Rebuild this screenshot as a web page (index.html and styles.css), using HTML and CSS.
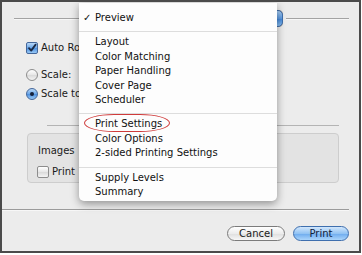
FILE: index.html
```html
<!DOCTYPE html>
<html>

<head>
    <title>Print</title>
    <link rel="stylesheet" href="styles.css">
</head>

<body>
    <div class="sheet">
        <div class="top-row">
            <div class="rule"></div>
            <div class="popup"><span class="popup-cap"></span></div>
            <div class="rule rule-short"></div>
        </div>

        <label class="option option-rotate">
            <span class="check checked">
                <svg width="10" height="10" viewBox="0 0 10 10"><path d="M2 5.2 L4.2 7.6 L8.6 1.6" fill="none" stroke="#1b2a44" stroke-width="1.8" stroke-linecap="round" stroke-linejoin="round"/></svg>
            </span>Auto Rotate
        </label>
        <label class="option option-scale"><span class="radio"></span>Scale:</label>
        <label class="option option-fit"><span class="radio selected"></span>Scale to Fit:</label>

        <div class="section-rule"></div>

        <div class="group">
            <div class="group-title">Images</div>
            <label class="option"><span class="check"></span>Print</label>
        </div>

        <div class="footer-rule"></div>
        <div class="buttons">
            <button class="button">Cancel</button>
            <button class="button button-default">Print</button>
        </div>

        <!-- popup menu, open over the dialog -->
        <div class="menu">
            <div class="menu-item"><span class="tick">&#10003;</span>Preview</div>
            <div class="menu-sep"></div>
            <div class="menu-item">Layout</div>
            <div class="menu-item">Color Matching</div>
            <div class="menu-item">Paper Handling</div>
            <div class="menu-item">Cover Page</div>
            <div class="menu-item">Scheduler</div>
            <div class="menu-sep"></div>
            <div class="menu-item"><span class="marked">Print Settings</span></div>
            <div class="menu-item">Color Options</div>
            <div class="menu-item">2-sided Printing Settings</div>
            <div class="menu-sep"></div>
            <div class="menu-item">Supply Levels</div>
            <div class="menu-item">Summary</div>
        </div>
    </div>
</body>

</html>
```

FILE: styles.css
```css
body {
    margin: 0;
    background: #ffffff;
    font-family: "DejaVu Sans", sans-serif;
    font-size: 10px;
    color: #1a1a1a;
}

.sheet {
    position: relative;
    width: 361px;
    height: 253px;
    box-sizing: border-box;
    border: 2px solid #4b4b4b;
    background: #ececec;
    padding: 8px 10px 0 12px;
    overflow: hidden;
}

.top-row {
    display: flex;
    align-items: center;
    height: 17px;
}

.rule {
    flex: 1;
    height: 1px;
    background: #a3a3a3;
    border-bottom: 1px solid #f7f7f7;
}

.rule-short {
    flex: none;
    width: 63px;
}

.popup {
    position: relative;
    width: 183px;
    height: 17px;
    margin: 0 3px;
    box-sizing: border-box;
    border: 1px solid #8c8c8c;
    border-radius: 4px;
    background: #fafafa;
}

.popup-cap {
    position: absolute;
    right: -1px;
    top: -1px;
    width: 18px;
    height: 17px;
    box-sizing: border-box;
    border: 1px solid #3f6fae;
    border-radius: 0 5px 5px 0;
    background: linear-gradient(#a9cff5, #5d9be2 50%, #3f84d8 51%, #8cc2f4);
}

.option {
    display: flex;
    align-items: center;
    gap: 3px;
    height: 14px;
    line-height: 14px;
    white-space: nowrap;
}

.option-rotate {
    margin: 14px 0 0 12px;
}

.option-scale {
    margin: 13px 0 0 12px;
}

.option-fit {
    margin: 5px 0 0 12px;
}

.check {
    display: flex;
    align-items: center;
    justify-content: center;
    width: 12px;
    height: 12px;
    box-sizing: border-box;
    border: 1px solid #8d8d8d;
    border-radius: 2px;
    background: linear-gradient(#ffffff, #e6e6e6 50%, #d9d9d9 51%, #f4f4f4);
}

.check.checked {
    border-color: #44679b;
    background: linear-gradient(#b9d8f7, #6aa6e8 50%, #4b8ede 51%, #97c8f5);
}

.radio {
    position: relative;
    width: 12px;
    height: 12px;
    box-sizing: border-box;
    border: 1px solid #8d8d8d;
    border-radius: 50%;
    background: linear-gradient(#ffffff, #e6e6e6 50%, #d9d9d9 51%, #f4f4f4);
}

.radio.selected {
    border-color: #44679b;
    background: linear-gradient(#b9d8f7, #6aa6e8 50%, #4b8ede 51%, #97c8f5);
}

.radio.selected::after {
    content: "";
    position: absolute;
    left: 3px;
    top: 3px;
    width: 4px;
    height: 4px;
    border-radius: 50%;
    background: #15213a;
}

.section-rule {
    height: 1px;
    margin: 24px 10px 0 33px;
    background: #b4b4b4;
}

.group {
    height: 50px;
    box-sizing: border-box;
    margin: 7px 10px 0 13px;
    padding: 10px 10px 0 9px;
    border: 1px solid #cdcdcd;
    border-radius: 4px;
    background: #e3e3e3;
}

.group-title {
    height: 14px;
    line-height: 14px;
    margin: 0 0 7px 1px;
}

.footer-rule {
    height: 1px;
    margin: 26px 0 0 -12px;
    background: #9b9b9b;
    border-bottom: 1px solid #f7f7f7;
}

.buttons {
    display: flex;
    justify-content: flex-end;
    gap: 8px;
    margin-top: 15px;
}

.button {
    width: 58px;
    height: 15px;
    padding: 0;
    box-sizing: border-box;
    border: 1px solid #7b7b7b;
    border-radius: 8px;
    background: linear-gradient(#ffffff, #ececec 50%, #dedede 51%, #f7f7f7);
    font-family: "DejaVu Sans", sans-serif;
    font-size: 10px;
    line-height: 13px;
    color: #1a1a1a;
}

.button-default {
    width: 56px;
    border-color: #3f6fae;
    background: linear-gradient(#d2e7fc, #92c3f3 50%, #6caaee 51%, #abd5fb);
    color: #10203a;
}

.menu {
    position: absolute;
    left: 77px;
    top: 1px;
    width: 198px;
    padding: 8px 0 2px;
    background: #fdfdfd;
    border-radius: 0 0 5px 5px;
    box-shadow: 0 3px 9px rgba(0, 0, 0, 0.38);
}

.menu-item {
    position: relative;
    height: 14.4px;
    line-height: 14.4px;
    padding-left: 16px;
    color: #111111;
    white-space: nowrap;
}

.tick {
    position: absolute;
    left: 4px;
    top: 0;
}

.menu-sep {
    height: 0;
    margin: 6px 0 3px;
    border-top: 1px solid #dddddd;
}

.marked {
    position: relative;
    display: inline-block;
}

.marked::before {
    content: "";
    position: absolute;
    left: -11px;
    top: -3px;
    width: 86px;
    height: 18px;
    box-sizing: border-box;
    border: 1.5px solid #cf3b3b;
    border-radius: 30px / 9px;
}
```
